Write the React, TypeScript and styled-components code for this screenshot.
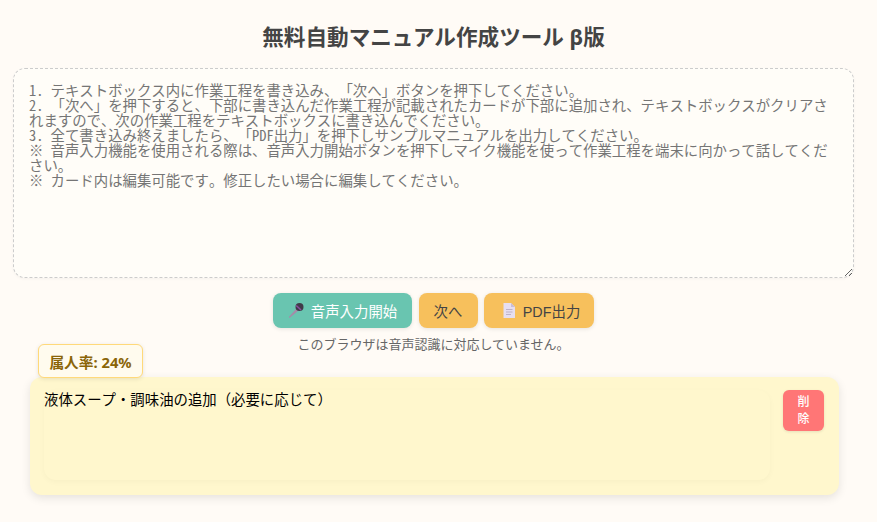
import React from "react";
import styled, { createGlobalStyle } from "styled-components";

const sans = `"Noto Sans", "Noto Sans CJK JP", sans-serif`;
const control = `"Liberation Sans", "Noto Sans CJK JP", sans-serif`;
const mono = `"Noto Sans Mono CJK JP", monospace`;

const Global = createGlobalStyle`
  html, body { margin: 0; padding: 0; background: #fffbf6; }
  body { font-family: ${sans}; color: #444; text-spacing-trim: space-all; }
  * { box-sizing: border-box; }
`;

const Page = styled.div`
  width: 867px;
  height: 522px;
  overflow: hidden;
  padding: 20px 13px 0;
  display: flex;
  flex-direction: column;
  align-items: center;
`;

const Title = styled.h1`
  margin: 0 0 15px;
  height: 33px;
  line-height: 33px;
  font-size: 21.6px;
  font-weight: 700;
  color: #444;
`;

const Input = styled.textarea`
  display: block;
  width: 841px;
  height: 210px;
  flex: none;
  padding: 13px 15px;
  border: 1px dashed #ccc;
  border-radius: 12px;
  background: #fffdf8;
  font-family: ${mono};
  font-size: 14.4px;
  line-height: 15px;
  text-spacing-trim: space-all;
  box-shadow: 0 1px 3px rgba(0, 0, 0, 0.04);
  outline: none;
  &::placeholder { color: #757575; opacity: 1; }
`;

const Actions = styled.div`
  display: flex;
  gap: 6.5px;
  margin-top: 15px;
`;

const Action = styled.button<{ $bg: string; $fg: string; $w: number; $gap?: number }>`
  display: flex;
  align-items: center;
  justify-content: center;
  gap: ${(p) => p.$gap ?? 0}px;
  width: ${(p) => p.$w}px;
  height: 35px;
  padding: 0;
  border: none;
  border-radius: 8px;
  background: ${(p) => p.$bg};
  color: ${(p) => p.$fg};
  font-family: ${control};
  font-size: 14.4px;
  font-weight: 400;
  text-spacing-trim: space-all;
  box-shadow: 0 1px 4px rgba(0, 0, 0, 0.1);
`;

const Notice = styled.p`
  margin: 8px 0 0;
  height: 17px;
  line-height: 17px;
  font-size: 13px;
  color: #666;
`;

const Card = styled.section`
  position: relative;
  align-self: flex-start;
  width: 809px;
  height: 118px;
  margin: 24px 0 0 17px;
  padding: 13px 15px 15px 14px;
  display: flex;
  justify-content: space-between;
  align-items: flex-start;
  background: #fff7cd;
  border-radius: 12px;
  box-shadow: 0 3px 10px rgba(0, 0, 0, 0.1);
`;

const Badge = styled.div`
  position: absolute;
  left: 8px;
  top: -33px;
  width: 105px;
  height: 34px;
  display: flex;
  align-items: center;
  justify-content: center;
  background: #fffbee;
  border: 1px solid #ffd97a;
  border-radius: 6px;
  box-shadow: 0 1px 4px rgba(0, 0, 0, 0.1);
  color: #8a6508;
  font-size: 14.72px;
  font-weight: 700;
`;

const CardText = styled.div`
  width: 726px;
  height: 90px;
  background: #fff7cd;
  border-radius: 12px;
  box-shadow: 0 2px 6px rgba(0, 0, 0, 0.03);
  font-family: ${mono};
  font-size: 14.4px;
  line-height: 18px;
  color: #000;
`;

const Delete = styled.button`
  width: 41px;
  height: 41px;
  padding: 0 12px;
  border: none;
  border-radius: 6px;
  background: #ff7676;
  color: #fff;
  font-family: ${control};
  font-size: 12px;
  font-weight: 500;
  line-height: 17px;
  box-shadow: 0 1px 3px rgba(0, 0, 0, 0.1);
`;

const Mic = () => (
  <svg width="17" height="17" viewBox="0 0 17 17">
    <path d="M1.5 16 L0.8 15 L8.5 6.5 L10.5 8.5 Z" fill="#a48ca8" />
    <circle cx="11.5" cy="5" r="4" fill="#3f3a48" />
    <path d="M8.2 3.5 L13 8" stroke="#8a4f9e" strokeWidth="1.6" />
  </svg>
);

const DocIcon = styled.svg`
  margin-left: 5px;
`;

const Doc = () => (
  <DocIcon width="12" height="15" viewBox="0 0 12 15">
    <path d="M0.5 0 H8 L12 4 V15 H0.5 Z" fill="#e6def0" />
    <path d="M8 0 L12 4 H8 Z" fill="#c9bdd8" />
    <path d="M3 6.5 H9.5 M3 9 H9.5 M3 11.5 H8" stroke="#bdb2c8" strokeWidth="1" />
  </DocIcon>
);

const placeholder = `1. テキストボックス内に作業工程を書き込み、「次へ」ボタンを押下してください。
2. 「次へ」を押下すると、下部に書き込んだ作業工程が記載されたカードが下部に追加され、テキストボックスがクリアされますので、次の作業工程をテキストボックスに書き込んでください。
3. 全て書き込み終えましたら、「PDF出力」を押下しサンプルマニュアルを出力してください。
※ 音声入力機能を使用される際は、音声入力開始ボタンを押下しマイク機能を使って作業工程を端末に向かって話してください。
※ カード内は編集可能です。修正したい場合に編集してください。`;

export default function App() {
  return (
    <Page>
      <Global />
      <Title>無料自動マニュアル作成ツール β版</Title>
      <Input placeholder={placeholder} />
      <Actions>
        <Action $bg="#69c5b0" $fg="#fff" $w={139} $gap={6}><Mic />音声入力開始</Action>
        <Action $bg="#f7c05c" $fg="#444" $w={59}>次へ</Action>
        <Action $bg="#f7c05c" $fg="#444" $w={110} $gap={8}><Doc />PDF出力</Action>
      </Actions>
      <Notice>このブラウザは音声認識に対応していません。</Notice>
      <Card>
        <Badge>属人率: 24%</Badge>
        <CardText>液体スープ・調味油の追加（必要に応じて）</CardText>
        <Delete>削除</Delete>
      </Card>
    </Page>
  );
}
